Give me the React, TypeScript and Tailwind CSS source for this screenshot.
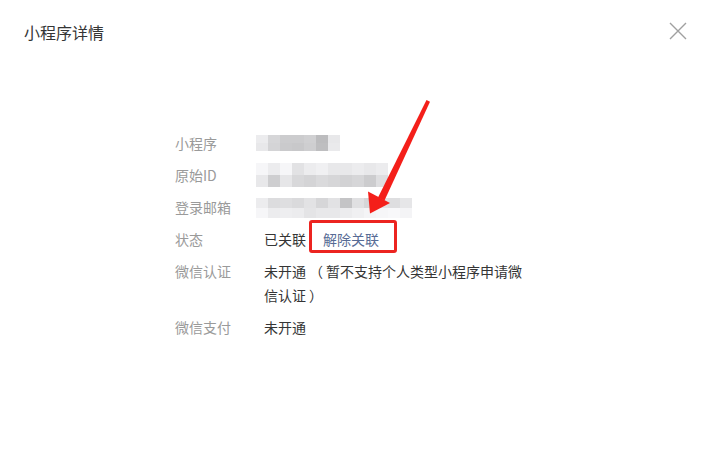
const font = { fontFamily: '"Noto Sans CJK SC", "Noto Sans", sans-serif' };

// masked values: grey levels of the pixelated blocks, one array per band
const masks: { top: number; cell: number; bands: number[][]; h: number }[] = [
  {
    top: 4,
    cell: 12,
    h: 8,
    bands: [
      [236, 214, 204, 204, 208, 188, 232],
      [232, 212, 202, 200, 206, 190, 234],
    ],
  },
  {
    top: 0,
    cell: 12,
    h: 12,
    bands: [
      [246, 236, 246, 226, 236, 240, 232, 232, 236, 232, 236],
      [232, 206, 230, 216, 212, 218, 214, 210, 214, 204, 222],
    ],
  },
  {
    top: 3,
    cell: 12,
    h: 10,
    bands: [
      [236, 220, 222, 218, 226, 214, 226, 196, 224, 214, 226, 222, 230],
      [246, 236, 238, 236, 228, 232, 232, 236, 240, 244, 246, 248, 244],
    ],
  },
];

function Mask({ index }: { index: number }) {
  const m = masks[index];
  return (
    <div className="-ml-2 flex h-6 flex-col" style={{ paddingTop: m.top }}>
      {m.bands.map((band, i) => (
        <div key={i} className="flex">
          {band.map((g, j) => (
            <div
              key={j}
              style={{
                width: m.cell,
                height: m.h,
                backgroundColor: `rgb(${g},${g},${g + 2})`,
              }}
            />
          ))}
        </div>
      ))}
    </div>
  );
}

function Row({ label, children }: { label: string; children: React.ReactNode }) {
  return (
    <div className="mb-2 flex text-[14px] leading-6">
      <div className="w-[89px] shrink-0 text-[#9a9a9a]">{label}</div>
      <div className="w-[270px] text-[#353535]">{children}</div>
    </div>
  );
}

function Paren({ children }: { children: string }) {
  return <span className="inline-block w-5 text-center">{children}</span>;
}

export default function App() {
  return (
    <div className="relative h-[456px] w-[715px] overflow-hidden bg-white" style={font}>
      <header className="flex items-start justify-between pl-6 pr-7 pt-5">
        <h1 className="text-[16px] leading-6 font-normal text-[#353535]">小程序详情</h1>
        <button aria-label="关闭" className="mt-[2px] text-[#a0a0a0]">
          <svg width="18" height="18" viewBox="0 0 18 18" className="block">
            <path d="M1 1 L17 17 M17 1 L1 17" stroke="currentColor" strokeWidth="1.4" fill="none" />
          </svg>
        </button>
      </header>

      <div className="mt-[87px] pl-[175px]">
        <Row label="小程序">
          <Mask index={0} />
        </Row>
        <Row label="原始ID">
          <Mask index={1} />
        </Row>
        <Row label="登录邮箱">
          <Mask index={2} />
        </Row>
        <Row label="状态">
          <span>已关联</span>
          <span className="relative ml-[17px] text-[#576b95]">
            解除关联
            <span className="pointer-events-none absolute -left-[14px] -right-[18px] -top-[9px] -bottom-[4px] rounded-[3px] border-[3px] border-[#ec2420]" />
          </span>
        </Row>
        <Row label="微信认证">
          未开通<Paren>（</Paren>暂不支持个人类型小程序申请微信认证<Paren>）</Paren>
        </Row>
        <Row label="微信支付">未开通</Row>
      </div>

      <svg
        className="pointer-events-none absolute left-0 top-0"
        width="715"
        height="456"
        viewBox="0 0 715 456"
      >
        <polygon points="426.5,100 430,101.8 384.5,200.5 378,197.5" fill="#f41f1a" />
        <polygon points="370,213.5 368,191.5 390,203" fill="#f41f1a" />
      </svg>
    </div>
  );
}
